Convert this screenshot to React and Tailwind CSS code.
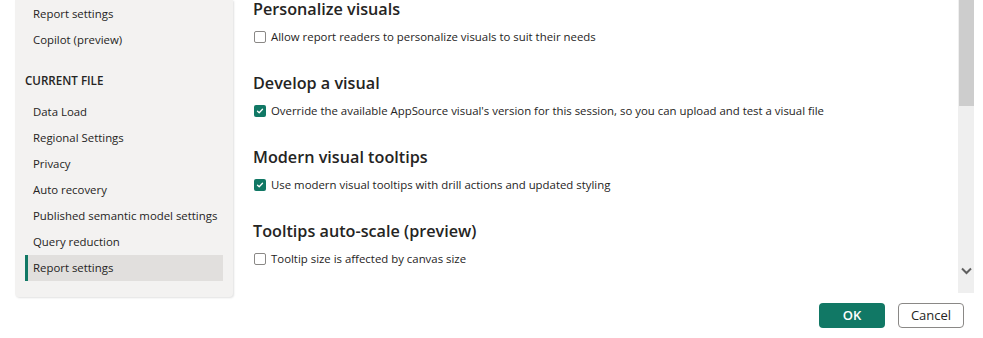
import React from 'react';

const FONT = "font-['Segoe_UI','Open_Sans',sans-serif]";

const globalItems = ['Report settings', 'Copilot (preview)'];
const fileItems = [
  'Data Load',
  'Regional Settings',
  'Privacy',
  'Auto recovery',
  'Published semantic model settings',
  'Query reduction',
  'Report settings',
];

const sections = [
  { title: 'Personalize visuals', label: 'Allow report readers to personalize visuals to suit their needs', checked: false },
  { title: 'Develop a visual', label: "Override the available AppSource visual's version for this session, so you can upload and test a visual file", checked: true },
  { title: 'Modern visual tooltips', label: 'Use modern visual tooltips with drill actions and updated styling', checked: true },
  { title: 'Tooltips auto-scale (preview)', label: 'Tooltip size is affected by canvas size', checked: false },
];

const NavItem = ({ label, active }) => (
  <div
    className={
      active
        ? 'h-[26px] flex items-center pl-[5px] border-l-[3px] border-[#117865] bg-[#e1dfdd] text-[11.4px] text-[#252423] whitespace-nowrap'
        : 'h-[26px] flex items-center pl-[8px] text-[11.4px] text-[#252423] whitespace-nowrap'
    }
  >
    {label}
  </div>
);

const Checkbox = ({ checked }) =>
  checked ? (
    <span className="w-[12px] h-[12px] rounded-[2px] bg-[#117865] flex items-center justify-center shrink-0">
      <svg width="8" height="8" viewBox="0 0 8 8" fill="none">
        <path d="M1.5 4.2 L3.2 5.8 L6.5 2.3" stroke="white" strokeWidth="1.3" strokeLinecap="round" strokeLinejoin="round" />
      </svg>
    </span>
  ) : (
    <span className="w-[12px] h-[12px] rounded-[2px] border border-[#8a8886] bg-white shrink-0" />
  );

const Section = ({ title, label, checked }) => (
  <div className="mb-[28px]">
    <h3 className="h-[18px] leading-[18px] text-[16.2px] font-semibold text-[#252423] whitespace-nowrap">{title}</h3>
    <label className="mt-[10px] h-[18px] flex items-center gap-[5px] pl-[1px] text-[11.4px] text-[#252423] whitespace-nowrap">
      <Checkbox checked={checked} />
      <span>{label}</span>
    </label>
  </div>
);

export default function App() {
  return (
    <div className={`w-[983px] h-[338px] bg-white overflow-hidden flex flex-col ${FONT}`}>
      <div className="h-[297px] flex">
        <aside className="ml-[15px] w-[218px] h-full bg-[#f3f2f1] rounded-b-[4px] shadow-[1px_1px_2px_rgba(0,0,0,0.12)] pt-[1px] px-[10px]">
          {globalItems.map((item) => (
            <NavItem key={'g' + item} label={item} />
          ))}
          <div className="mt-[16px] h-[24px] flex items-center text-[11.6px] font-semibold text-[#252423]">CURRENT FILE</div>
          <div className="mt-[6px]">
            {fileItems.map((item, i) => (
              <NavItem key={item + i} label={item} active={i === fileItems.length - 1} />
            ))}
          </div>
        </aside>

        <main className="flex-1 pl-[20px]">
          {sections.map((s) => (
            <Section key={s.title} {...s} />
          ))}
        </main>

        <div className="w-[16px] h-[293px] mr-[9px] bg-[#efefef] flex flex-col">
          <div className="h-[106px] ml-[1px] bg-[#cdcdcd]" />
          <div className="flex-1" />
          <div className="h-[40px] flex items-start justify-center pt-[14px]">
            <svg width="11" height="8" viewBox="0 0 11 8" fill="none">
              <path d="M1 1.5 L5.5 6 L10 1.5" stroke="#5f5f5f" strokeWidth="2" />
            </svg>
          </div>
        </div>
      </div>

      <div className="flex justify-end gap-[13px] pt-[6px] pr-[19px]">
        <button className="w-[66px] h-[25px] rounded-[4px] bg-[#117865] text-white text-[13px] font-semibold">OK</button>
        <button className="w-[66px] h-[25px] rounded-[4px] bg-white border border-[#8a8886] text-[#252423] text-[13px]">Cancel</button>
      </div>
    </div>
  );
}
